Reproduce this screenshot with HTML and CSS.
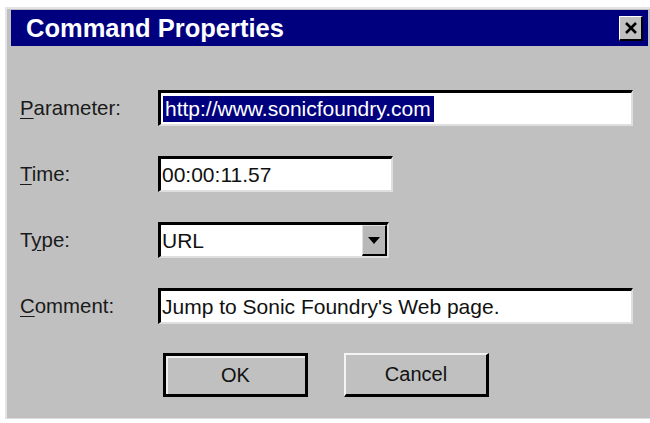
FILE: index.html
```html
<!DOCTYPE html>
<html lang="en">
<head>
<meta charset="utf-8">
<title>Command Properties</title>
<link rel="stylesheet" href="styles.css">
</head>
<body>
<div class="dialog">
  <div class="titlebar">
    <span class="title">Command Properties</span>
    <span class="close" aria-label="Close">
      <svg width="14" height="12" viewBox="0 0 14 12"><path d="M2 1 L12 11 M12 1 L2 11" stroke="#000" stroke-width="2.6" fill="none"/></svg>
    </span>
  </div>
  <div class="content">
    <div class="row">
      <label class="label"><u>P</u>arameter:</label>
      <div class="field wide"><span class="selected">http://www.sonicfoundry.com</span></div>
    </div>
    <div class="row">
      <label class="label"><u>T</u>ime:</label>
      <div class="field time">00:00:11.57</div>
    </div>
    <div class="row">
      <label class="label">T<u>y</u>pe:</label>
      <div class="field combo">
        <span class="combo-text">URL</span>
        <span class="drop">
          <svg width="12" height="7" viewBox="0 0 12 7"><path d="M0 0 H12 L6 7 Z" fill="#000"/></svg>
        </span>
      </div>
    </div>
    <div class="row">
      <label class="label"><u>C</u>omment:</label>
      <div class="field wide">Jump to Sonic Foundry's Web page.</div>
    </div>
    <div class="buttons">
      <button class="btn default">OK</button>
      <button class="btn">Cancel</button>
    </div>
  </div>
</div>
</body>
</html>
```
FILE: styles.css
```css
html, body {
  margin: 0;
  background: #ffffff;
}

body {
  width: 650px;
  height: 423px;
  overflow: hidden;
  font-family: "Liberation Sans", Arial, sans-serif;
  color: #000;
}

.dialog {
  margin: 7px 0 0 5px;
  height: 408px;
  background: #c0c0c0;
  border-top: 2px solid #e4e4e4;
  border-left: 2px solid #e4e4e4;
  border-bottom: 1px solid #dcdcdc;
  padding: 1px 2px 0 4px;
}

.titlebar {
  height: 36px;
  background: #00007f;
  display: flex;
  align-items: center;
  justify-content: space-between;
  padding: 0 5px 0 15px;
}

.title {
  color: #fff;
  font-weight: bold;
  font-size: 25.5px;
  padding-top: 1px;
}

.close {
  width: 24px;
  height: 25px;
  box-sizing: border-box;
  background: #c0c0c0;
  border-top: 1px solid #fff;
  border-left: 1px solid #fff;
  border-right: 2px solid #000;
  border-bottom: 2px solid #000;
  display: flex;
  align-items: center;
  justify-content: center;
}

.content {
  padding: 44px 0 0 9px;
  display: flex;
  flex-direction: column;
  gap: 30px;
}

.row {
  display: flex;
  align-items: center;
  height: 36px;
}

.label {
  width: 138px;
  font-size: 20.4px;
  color: #1a1a1a;
}

.label u {
  text-decoration-thickness: 1px;
  text-underline-offset: 3px;
}

.field {
  box-sizing: border-box;
  height: 36px;
  background: #fff;
  border-top: 3px solid #000;
  border-left: 3px solid #000;
  border-right: 2px solid #dfdfdf;
  border-bottom: 2px solid #dfdfdf;
  font-size: 21px;
  padding-left: 1px;
  display: flex;
  align-items: center;
  white-space: nowrap;
  color: #111;
}

.wide {
  width: 475px;
}

.time {
  width: 235px;
}

.selected {
  background: #00007f;
  color: #fff;
  padding: 1px 3px 1px 2px;
  margin-left: 1px;
}

.combo {
  width: 231px;
  justify-content: space-between;
  padding-right: 0;
}

.drop {
  align-self: stretch;
  width: 25px;
  margin: 0;
  box-sizing: border-box;
  background: #b8b8b8;
  border-top: 1px solid #e0e0e0;
  border-left: 1px solid #e0e0e0;
  border-right: 2px solid #000;
  border-bottom: 2px solid #000;
  display: flex;
  align-items: center;
  justify-content: center;
}

.buttons {
  display: flex;
  gap: 36px;
  padding-left: 143px;
  margin-top: -1px;
}

.btn {
  width: 145px;
  height: 44px;
  box-sizing: border-box;
  background: #c0c0c0;
  font-family: "Liberation Sans", Arial, sans-serif;
  font-size: 20px;
  color: #111;
  border-top: 2px solid #f4f4f4;
  border-left: 2px solid #f4f4f4;
  border-right: 3px solid #000;
  border-bottom: 3px solid #000;
  padding: 0;
}

.btn.default {
  border: 3px solid #000;
  box-shadow: inset 2px 2px 0 #efefef;
}
```
